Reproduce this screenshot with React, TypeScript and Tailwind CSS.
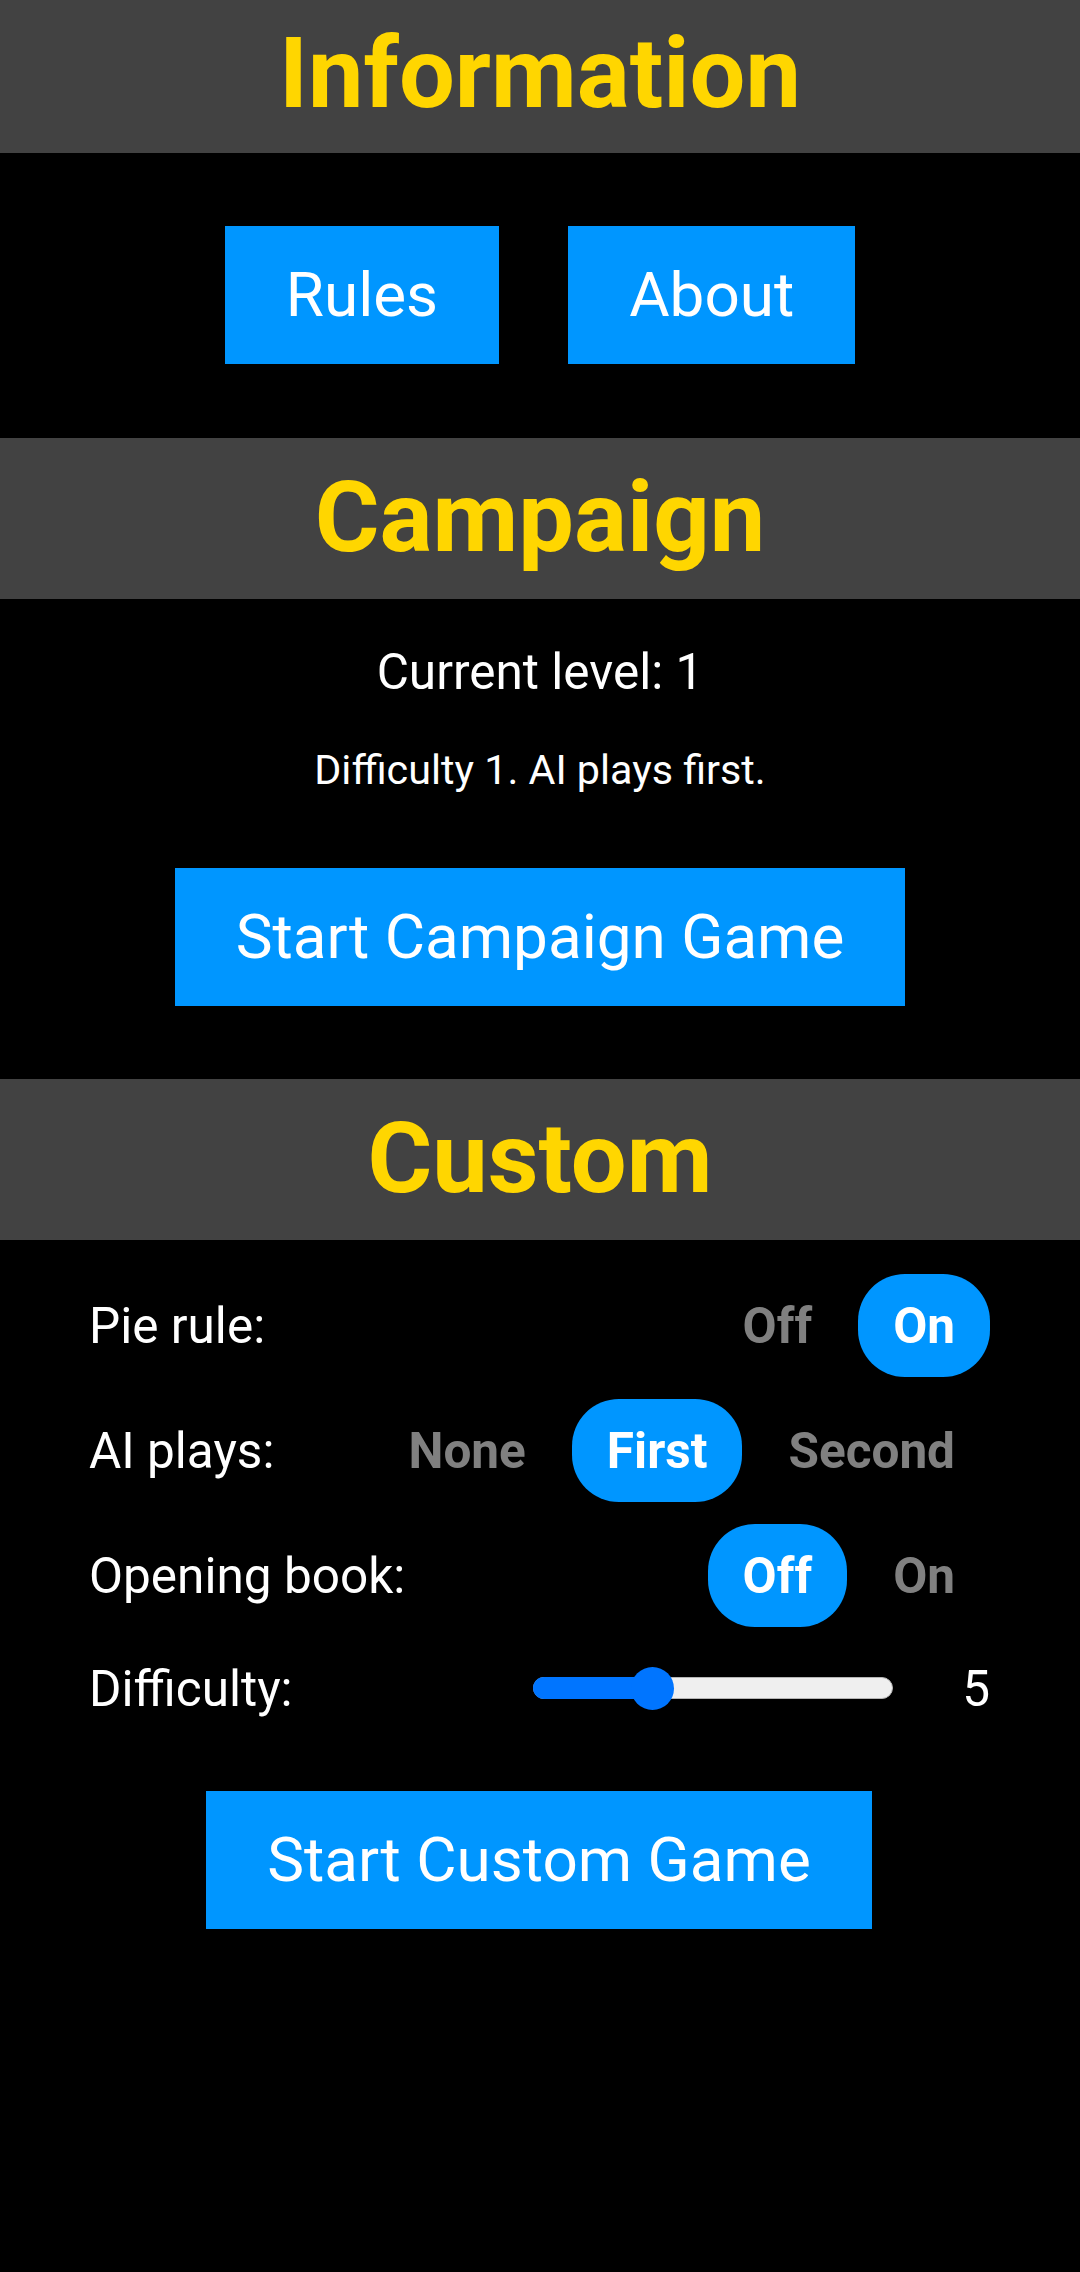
import React from 'react'

const MIN_LEVEL = 1
const MAX_LEVEL = 14

function Header({ title, first }: { title: string; first?: boolean }) {
  return (
    <header className={first ? 'h-[153px] bg-[#424242] pt-[24px]' : 'h-[161px] bg-[#424242] pt-[30px]'}>
      <h1 className="text-center text-[99px] leading-[99px] font-bold text-[#ffd600]">{title}</h1>
    </header>
  )
}

function BigButton({ label }: { label: string }) {
  return (
    <button className="flex h-[138px] items-center bg-[#0096ff] px-[61px] text-[62px] leading-[72px] text-white">
      {label}
    </button>
  )
}

function Choice({ label, active }: { label: string; active?: boolean }) {
  return (
    <span
      className={
        active
          ? 'flex h-[103px] items-center rounded-[47px] bg-[#0096ff] px-[35px] font-bold text-white'
          : 'flex h-[103px] items-center px-[35px] font-bold text-[#808080]'
      }
    >
      {label}
    </span>
  )
}

function Row({ label, children }: { label: string; children: React.ReactNode }) {
  return (
    <div className="flex h-[103px] items-center justify-between">
      <span>{label}</span>
      <div className="flex items-center gap-[11px]">{children}</div>
    </div>
  )
}

export default function App() {
  const difficulty = 5
  const pct = (difficulty - MIN_LEVEL) / (MAX_LEVEL - MIN_LEVEL)
  const thumbLeft = pct * (360 - 43)

  return (
    <div className="min-h-[2272px] bg-black font-['Roboto',sans-serif] text-white">
      <Header title="Information" first />
      <div className="flex justify-center gap-[69px] pt-[73px] pb-[74px]">
        <BigButton label="Rules" />
        <BigButton label="About" />
      </div>

      <Header title="Campaign" />
      <div className="flex flex-col items-center pt-[44px] pb-[73px]">
        <p className="text-[49.5px] leading-[58px]">Current level: 1</p>
        <p className="mt-[45px] text-[41.25px] leading-[48px]">Difficulty 1. AI plays first.</p>
        <div className="mt-[74px]">
          <BigButton label="Start Campaign Game" />
        </div>
      </div>

      <Header title="Custom" />
      <div className="pt-[34px] pr-[90px] pl-[89px] text-[49.5px] leading-[58px]">
        <div className="flex flex-col gap-[22px]">
          <Row label="Pie rule:">
            <Choice label="Off" />
            <Choice label="On" active />
          </Row>
          <Row label="AI plays:">
            <Choice label="None" />
            <Choice label="First" active />
            <Choice label="Second" />
          </Row>
          <Row label="Opening book:">
            <Choice label="Off" active />
            <Choice label="On" />
          </Row>
        </div>
        <div className="mt-[40px] flex h-[43px] items-center">
          <span className="flex-1">Difficulty:</span>
          <div className="relative h-[43px] w-[360px]">
            <div className="absolute top-[10px] left-0 h-[22px] w-[360px] rounded-full border border-[#b5b5b5] bg-[#efefef]" />
            <div
              className="absolute top-[10px] left-0 h-[22px] rounded-l-full bg-[#0075ff]"
              style={{ width: thumbLeft + 22 }}
            />
            <div
              className="absolute top-0 h-[43px] w-[43px] rounded-full bg-[#0075ff]"
              style={{ left: thumbLeft }}
            />
          </div>
          <span className="w-[97px] text-right">{difficulty}</span>
        </div>
        <div className="mt-[81px] flex justify-center pr-[1px]">
          <BigButton label="Start Custom Game" />
        </div>
      </div>
    </div>
  )
}
